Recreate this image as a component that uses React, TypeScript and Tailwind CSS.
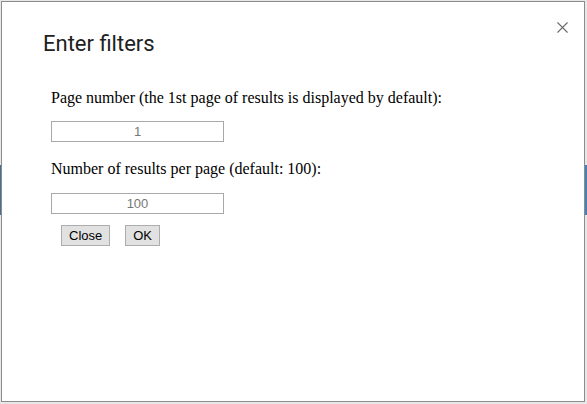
import { X } from "lucide-react";

export default function App() {
  return (
    <div className="relative w-[587px] h-[404px] bg-[#e8e8e8] overflow-hidden">
      {/* background bits peeking around the dialog */}
      <div className="absolute left-0 top-[165px] w-[2px] h-[50px] bg-[#4a6d93]" />
      <div className="absolute right-0 top-[165px] w-[2px] h-[50px] bg-[#4a7fb5]" />

      <div className="relative ml-[1px] mt-[1px] w-[584px] h-[401px] bg-white border border-[#8c8c8c]">
        <button className="absolute right-[12px] top-[16px] text-[#6b6b6b]">
          <X className="w-[19px] h-[19px]" strokeWidth={1.4} />
        </button>

        <h1
          className="pl-[41px] pt-[28px] text-[22px] leading-[28px] text-[#212121]"
          style={{ fontFamily: "Roboto, sans-serif" }}
        >
          Enter filters
        </h1>

        <div
          className="pl-[49px] pt-[29px] text-[16px] text-black"
          style={{ fontFamily: '"Liberation Serif", serif' }}
        >
          <p className="leading-[22px]">
            Page number (the 1st page of results is displayed by default):
          </p>
          <input
            type="text"
            defaultValue="1"
            className="mt-[12px] block w-[173px] h-[21px] border border-[#a9a9a9] text-center text-[13px] text-[#777] outline-none"
            style={{ fontFamily: '"Liberation Sans", sans-serif' }}
          />
          <p className="mt-[16px] leading-[22px]">
            Number of results per page (default: 100):
          </p>
          <input
            type="text"
            defaultValue="100"
            className="mt-[13px] block w-[173px] h-[21px] border border-[#a9a9a9] text-center text-[13px] text-[#777] outline-none"
            style={{ fontFamily: '"Liberation Sans", sans-serif' }}
          />
          <div
            className="mt-[11px] ml-[10px] flex gap-[15px] text-[13px]"
            style={{ fontFamily: '"Liberation Sans", sans-serif' }}
          >
            <button className="h-[21px] px-[7px] bg-[#e1e1e1] border border-[#adadad] text-black leading-[19px]">
              Close
            </button>
            <button className="h-[21px] px-[7px] bg-[#e1e1e1] border border-[#adadad] text-black leading-[19px]">
              OK
            </button>
          </div>
        </div>
      </div>
    </div>
  );
}
